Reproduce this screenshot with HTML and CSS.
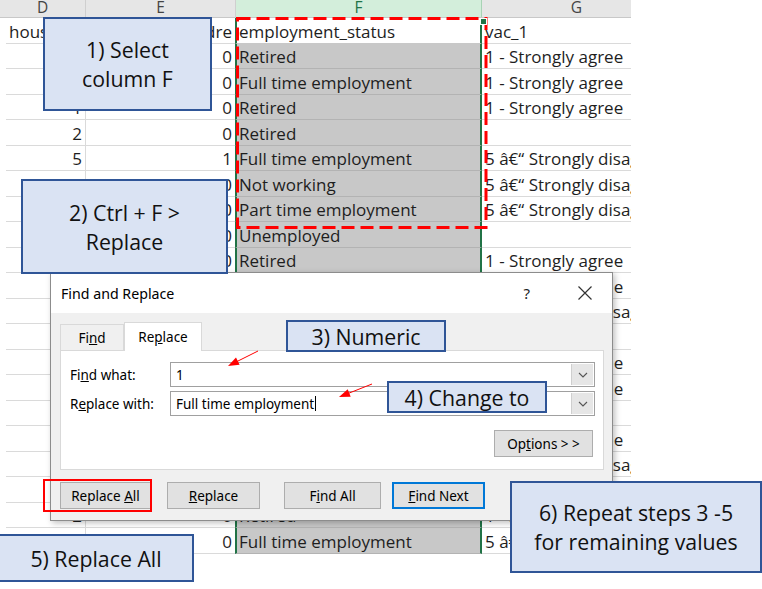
FILE: index.html
```html
<!DOCTYPE html>
<html>
<head>
<meta charset="utf-8">
<link rel="stylesheet" href="styles.css">
</head>
<body>
<div class="screen">
  <div class="sheet">
    <div class="hdr">
      <div class="ch">D</div>
      <div class="ch">E</div>
      <div class="ch chf">F</div>
      <div class="ch">G</div>
    </div>
    <div class="row"><div class="pad"></div><div class="c">household_size</div><div class="c num">childre</div><div class="c f act">employment_status</div><div class="c">vac_1</div></div>
    <div class="row"><div class="pad"></div><div class="c num">3</div><div class="c num">0</div><div class="c f">Retired</div><div class="c">1 - Strongly agree</div></div>
    <div class="row"><div class="pad"></div><div class="c num">2</div><div class="c num">0</div><div class="c f">Full time employment</div><div class="c">1 - Strongly agree</div></div>
    <div class="row"><div class="pad"></div><div class="c num">1</div><div class="c num">0</div><div class="c f">Retired</div><div class="c">1 - Strongly agree</div></div>
    <div class="row"><div class="pad"></div><div class="c num">2</div><div class="c num">0</div><div class="c f">Retired</div><div class="c"></div></div>
    <div class="row"><div class="pad"></div><div class="c num">5</div><div class="c num">1</div><div class="c f">Full time employment</div><div class="c">5 â€“ Strongly disagree</div></div>
    <div class="row"><div class="pad"></div><div class="c num">1</div><div class="c num">0</div><div class="c f">Not working</div><div class="c">5 â€“ Strongly disagree</div></div>
    <div class="row"><div class="pad"></div><div class="c num">2</div><div class="c num">0</div><div class="c f">Part time employment</div><div class="c">5 â€“ Strongly disagree</div></div>
    <div class="row"><div class="pad"></div><div class="c num">1</div><div class="c num">0</div><div class="c f">Unemployed</div><div class="c"></div></div>
    <div class="row"><div class="pad"></div><div class="c num">2</div><div class="c num">0</div><div class="c f">Retired</div><div class="c">1 - Strongly agree</div></div>
    <div class="row"><div class="pad"></div><div class="c num">2</div><div class="c num">0</div><div class="c f">Retired</div><div class="c">1 - Strongly agree</div></div>
    <div class="row"><div class="pad"></div><div class="c num">3</div><div class="c num">1</div><div class="c f">Full time employment</div><div class="c">5 â€“ Strongly disagree</div></div>
    <div class="row"><div class="pad"></div><div class="c num">1</div><div class="c num">0</div><div class="c f">Not working</div><div class="c"></div></div>
    <div class="row"><div class="pad"></div><div class="c num">2</div><div class="c num">0</div><div class="c f">Retired</div><div class="c">1 - Strongly agree</div></div>
    <div class="row"><div class="pad"></div><div class="c num">2</div><div class="c num">0</div><div class="c f">Retired</div><div class="c">1 - Strongly agree</div></div>
    <div class="row"><div class="pad"></div><div class="c num">4</div><div class="c num">2</div><div class="c f">Unemployed</div><div class="c"></div></div>
    <div class="row"><div class="pad"></div><div class="c num">2</div><div class="c num">0</div><div class="c f">Retired</div><div class="c">1 - Strongly agree</div></div>
    <div class="row"><div class="pad"></div><div class="c num">3</div><div class="c num">1</div><div class="c f">Full time employment</div><div class="c">5 â€“ Strongly disagree</div></div>
    <div class="row"><div class="pad"></div><div class="c num">2</div><div class="c num">0</div><div class="c f">Retired</div><div class="c">1 - Strongly agree</div></div>
    <div class="row"><div class="pad"></div><div class="c num">2</div><div class="c num">0</div><div class="c f">Retired</div><div class="c">1 - Strongly agree</div></div>
    <div class="row"><div class="pad"></div><div class="c num">4</div><div class="c num">0</div><div class="c f">Full time employment</div><div class="c">5 â€“ Strongly disagree</div></div>
  </div>

  <svg class="dash" width="252" height="212" viewBox="0 0 252 212"><rect x="1.5" y="1.5" width="248.5" height="209" fill="none" stroke="#ff0000" stroke-width="3" stroke-dasharray="13 6"/></svg>
  <div class="fill-handle"></div>

  <div class="dialog">
    <div class="titlebar">
      <span class="title">Find and Replace</span>
      <span class="help">?</span>
      <svg class="close" width="16" height="16" viewBox="0 0 16 16"><path d="M1.5 1.5 L14.5 14.5 M14.5 1.5 L1.5 14.5" stroke="#333" stroke-width="1.2" fill="none"/></svg>
    </div>
    <div class="dbody">
      <div class="tabs">
        <div class="tab"><span>Fi<u>n</u>d</span></div>
        <div class="tab on"><span>Re<u>p</u>lace</span></div>
      </div>
      <div class="panel">
        <div class="field">
          <span class="lbl">Fi<u>n</u>d what:</span>
          <div class="combo"><span class="val">1</span><span class="drop"><svg width="10" height="6" viewBox="0 0 10 6"><path d="M1 1 L5 5 L9 1" stroke="#555" stroke-width="1.1" fill="none"/></svg></span></div>
        </div>
        <div class="field">
          <span class="lbl">R<u>e</u>place with:</span>
          <div class="combo"><span class="val"><span>Full time employment</span><span class="caret"></span></span><span class="drop"><svg width="10" height="6" viewBox="0 0 10 6"><path d="M1 1 L5 5 L9 1" stroke="#555" stroke-width="1.1" fill="none"/></svg></span></div>
        </div>
        <div class="optrow"><div class="btn opt"><span>Op<u>t</u>ions &gt; &gt;</span></div></div>
      </div>
      <div class="btnrow">
        <div class="btn b1"><span>Replace <u>A</u>ll</span></div>
        <div class="btn b2"><span><u>R</u>eplace</span></div>
        <div class="btn b3"><span>F<u>i</u>nd All</span></div>
        <div class="btn b4 def"><span><u>F</u>ind Next</span></div>
      </div>
    </div>
  </div>

  <div class="redbox"></div>

  <svg class="arrows" width="762" height="589" viewBox="0 0 762 589">
    <line x1="258" y1="351" x2="236" y2="362" stroke="#ff0000" stroke-width="1"/>
    <polygon points="228,366 239.6,364.7 236,357.5" fill="#ff0000"/>
    <line x1="372" y1="384" x2="348" y2="393.5" stroke="#ff0000" stroke-width="1"/>
    <polygon points="339,397 350.7,396.7 347.7,389.3" fill="#ff0000"/>
  </svg>

  <div class="callout k1"><span>1) Select<br>column F</span></div>
  <div class="callout k2"><span>2) Ctrl + F &gt;<br>Replace</span></div>
  <div class="callout k3"><span>3) Numeric</span></div>
  <div class="callout k4"><span>4) Change to</span></div>
  <div class="callout k5"><span>5) Replace All</span></div>
  <div class="callout k6"><span>6) Repeat steps 3 -5<br>for remaining values</span></div>
</div>
</body>
</html>
```
FILE: styles.css
```css
html, body {
  margin: 0;
  padding: 0;
  background: #ffffff;
}
.screen {
  position: relative;
  width: 762px;
  height: 589px;
  overflow: hidden;
  background: #ffffff;
  font-family: "Open Sans", "Liberation Sans", sans-serif;
}
.sheet {
  width: 631px;
  overflow: hidden;
  display: flex;
  flex-direction: column;
  color: #1e1e1e;
  font-size: 17px;
}
.hdr {
  display: grid;
  grid-template-columns: 86px 150px 246px 190px;
  height: 17px;
  background: #e6e6e6;
  border-bottom: 1px solid #c8c8c8;
}
.ch {
  display: flex;
  justify-content: center;
  align-items: flex-start;
  line-height: 15px;
  margin-top: 0;
  font-size: 15.5px;
  color: #444;
  border-right: 1px solid #cfcfcf;
  overflow: hidden;
}
.chf {
  background: #d3eedb;
  color: #217346;
  border-right: 1px solid #a8d3b5;
}
.row {
  display: grid;
  grid-template-columns: 6px 80px 150px 246px 190px;
  height: 25.5px;
}
.pad {
  background: #fff;
}
.c {
  display: flex;
  align-items: center;
  padding: 2px 3px 0 3px;
  white-space: nowrap;
  overflow: hidden;
  border-bottom: 1px solid #dadada;
  border-right: 1px solid #dadada;
  min-width: 0;
}
.num {
  justify-content: flex-end;
}
.c.f {
  background: #c8c8c8;
  border-left: 2px solid #217346;
  border-right: 2px solid #217346;
  border-bottom: 1px solid #b3b3b3;
  padding-left: 2px;
  margin-left: -1px;
}
.c.f.act {
  background: #ffffff;
  border-bottom: 1px solid #c8c8c8;
}
.fill-handle {
  position: absolute;
  left: 480px;
  top: 18px;
  width: 5px;
  height: 5px;
  background: #217346;
  border: 1px solid #fff;
}
.dash {
  position: absolute;
  left: 236px;
  top: 17px;
}

/* dialog */
.dialog {
  position: absolute;
  left: 50px;
  top: 272px;
  width: 561px;
  height: 247px;
  border: 1px solid #8c8c8c;
  background: #f0f0f0;
  box-shadow: 2px 2px 6px rgba(0,0,0,0.25);
  font-family: "Noto Sans", "Open Sans", sans-serif;
  font-size: 13.5px;
  color: #000;
  display: flex;
  flex-direction: column;
}
.titlebar {
  height: 40px;
  background: #ffffff;
  display: flex;
  align-items: center;
  padding: 0 0 0 10px;
}
.title {
  font-size: 14.2px;
  flex: 1;
}
.help {
  font-size: 15px;
  margin-right: 47px;
  color: #222;
}
.close {
  margin-right: 19px;
}
.dbody {
  flex: 1;
  display: flex;
  flex-direction: column;
  padding: 9px 0 0 9px;
}
.tabs {
  display: flex;
  align-items: flex-end;
  height: 28px;
}
.tab {
  width: 62px;
  height: 25px;
  display: flex;
  align-items: center;
  justify-content: center;
  background: #f0f0f0;
  border: 1px solid #d9d9d9;
  border-bottom: none;
}
.tab.on {
  width: 76px;
  height: 28px;
  background: #fff;
  position: relative;
  top: 1px;
  z-index: 1;
}
.panel {
  width: 533px;
  height: 107px;
  background: #fff;
  border: 1px solid #d9d9d9;
  display: flex;
  flex-direction: column;
  padding: 11px 0 0 9px;
}
.field {
  display: flex;
  align-items: center;
  height: 25px;
  margin-bottom: 4px;
}
.lbl {
  width: 100px;
}
.combo {
  width: 423px;
  height: 23px;
  border: 1px solid #a0a0a0;
  display: flex;
  align-items: center;
  justify-content: space-between;
  background: #fff;
}
.val {
  padding-left: 5px;
  display: flex;
  align-items: center;
}
.caret {
  display: inline-block;
  width: 1px;
  height: 15px;
  background: #000;
  margin-left: 1px;
}
.drop {
  width: 21px;
  height: 21px;
  margin-right: 1px;
  background: #e6e6e6;
  border-left: 1px solid #cfcfcf;
  display: flex;
  align-items: center;
  justify-content: center;
}
.optrow {
  display: flex;
  justify-content: flex-end;
  padding-right: 10px;
  margin-top: 10px;
}
.btn {
  height: 25px;
  background: #e1e1e1;
  border: 1px solid #adadad;
  display: flex;
  align-items: center;
  justify-content: center;
  white-space: pre;
}
.opt {
  width: 97px;
}
.btnrow {
  display: flex;
  margin-top: 12px;
}
.b1 { width: 89px; }
.b2 { width: 91px; margin-left: 16px; }
.b3 { width: 95px; margin-left: 24px; }
.b4 { width: 89px; margin-left: 11px; }
.def {
  border: 2px solid #0078d7;
  height: 23px;
}
.redbox {
  position: absolute;
  left: 43px;
  top: 479px;
  width: 105px;
  height: 29px;
  border: 2px solid #ff0000;
}
.arrows {
  position: absolute;
  left: 0;
  top: 0;
  pointer-events: none;
}

/* callouts */
.callout {
  position: absolute;
  box-sizing: border-box;
  background: #dae3f3;
  border: 2px solid #2f5597;
  color: #111;
  display: flex;
  align-items: center;
  justify-content: center;
  text-align: center;
  font-family: "Open Sans", "Liberation Sans", sans-serif;
  font-size: 21.3px;
  line-height: 29px;
}
.k1 { left: 43px; top: 17px; width: 169px; height: 94px; }
.k2 { left: 21px; top: 179px; width: 207px; height: 95px; }
.k3 { left: 286px; top: 320px; width: 160px; height: 32px; }
.k4 { left: 387px; top: 381px; width: 160px; height: 32px; }
.k5 { left: -2px; top: 534px; width: 196px; height: 48px; }
.k6 { left: 510px; top: 481px; width: 252px; height: 92px; }
```
